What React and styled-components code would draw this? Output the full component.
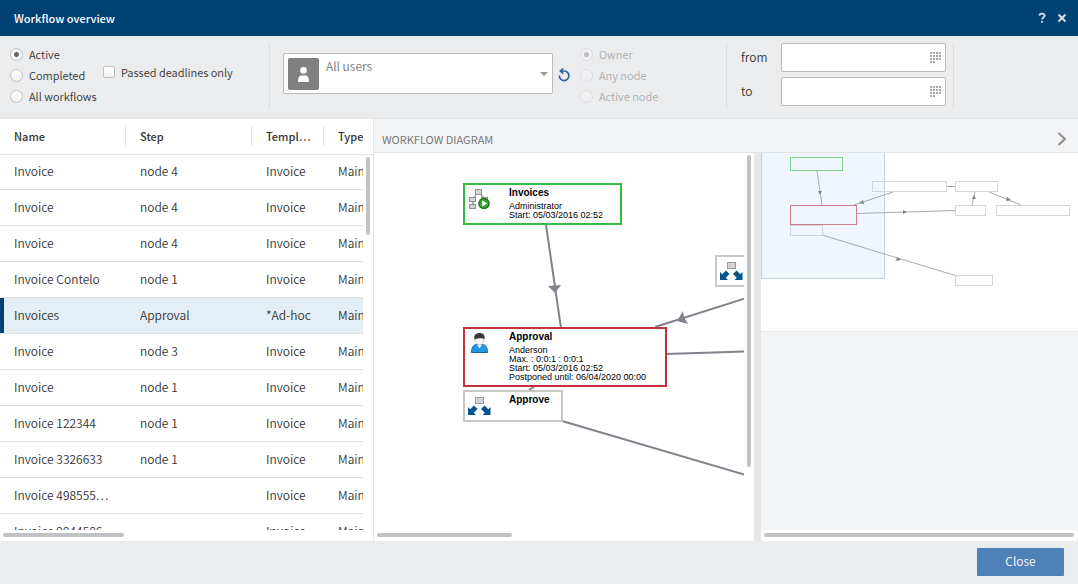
import { useState } from 'react'
import styled, { createGlobalStyle, css } from 'styled-components'

const GlobalStyle = createGlobalStyle`
  * {
    box-sizing: border-box;
  }

  body {
    margin: 0;
    color: #333;
    font-family: 'Noto Sans CJK KR', 'Source Sans Pro', sans-serif;
    font-size: 12px;
    font-weight: 350;
  }

  button, input, select {
    font: inherit;
    color: inherit;
  }
`

const Dialog = styled.div`
  height: 100vh;
  display: flex;
  flex-direction: column;
  background: #ebecee;
`

const TitleBar = styled.header`
  flex: 0 0 36px;
  display: flex;
  align-items: center;
  justify-content: space-between;
  padding: 0 8px 0 14px;
  background: #004173;
  color: #fff;
`

const Title = styled.h1`
  margin: 0;
  font-size: 11px;
  font-weight: 500;
`

const TitleActions = styled.div`
  display: flex;
  gap: 4px;
`

const IconButton = styled.button`
  display: flex;
  align-items: center;
  justify-content: center;
  width: 16px;
  height: 16px;
  padding: 0;
  border: none;
  background: none;
  cursor: pointer;
`

const FilterBar = styled.form`
  flex: 0 0 83px;
  display: flex;
  align-items: flex-start;
  padding: 7px 0 0 10px;
  border-bottom: 1px solid #e3e4e6;
`

const RadioGroup = styled.div`
  display: flex;
  flex-direction: column;
  gap: 1px;
  padding-top: 1px;
  opacity: ${(props) => (props.$disabled ? 0.35 : 1)};
`

const StatusGroup = styled(RadioGroup)`
  width: 93px;
`

const Option = styled.label`
  display: flex;
  align-items: center;
  gap: 6px;
  height: 20px;
  font-size: 11px;
  line-height: 20px;
  white-space: nowrap;
`

const choice = css`
  appearance: none;
  flex: none;
  width: 13px;
  height: 13px;
  margin: 0;
  border: 1px solid #c0c0c0;
  background: linear-gradient(#fff, #f1f1f1);
`

const Radio = styled.input.attrs({ type: 'radio' })`
  ${choice}
  border-radius: 50%;

  &:checked {
    background: radial-gradient(circle, #666 0 2px, #f8f8f8 3px);
  }
`

const Checkbox = styled.input.attrs({ type: 'checkbox' })`
  ${choice}
  width: 12px;
  height: 12px;
  border-radius: 2px;

  &:checked {
    background: #666;
    box-shadow: inset 0 0 0 2px #fff;
  }
`

const DeadlineOption = styled(Option)`
  margin-top: 19px;
  width: 166px;
`

const Divider = styled.div`
  width: 1px;
  height: 66px;
  background: #dcdde0;
`

const UserPicker = styled.div`
  display: flex;
  align-items: flex-start;
  width: 270px;
  height: 41px;
  margin: 10px 3px 0 13px;
  padding: 4px;
  border: 1px solid #bcbcbc;
  border-radius: 2px;
  background: #fff;
`

const Avatar = styled.div`
  display: flex;
  align-items: center;
  justify-content: center;
  width: 31px;
  height: 32px;
  border-radius: 2px;
  background: #808080;
`

const UserSelect = styled.select`
  appearance: none;
  flex: 1;
  height: 16px;
  padding: 0 0 0 7px;
  border: none;
  background: none;
  color: #777;
  line-height: 16px;
  outline: none;
`

const Caret = styled.span`
  align-self: center;
  border: 4px solid transparent;
  border-top-color: #999;
  border-bottom: none;
`

const ResetButton = styled(IconButton)`
  margin: 24px 8px 0 0;
`

const OwnerGroup = styled(RadioGroup)`
  width: 146px;
`

const DateFields = styled.div`
  display: flex;
  flex-direction: column;
  gap: 5px;
  padding: 0 7px 0 14px;
`

const DateRow = styled.div`
  display: flex;
  align-items: center;
`

const DateLabel = styled.label`
  width: 40px;
  padding-bottom: 3px;
`

const DateBox = styled.div`
  display: flex;
  align-items: center;
  width: 165px;
  height: 29px;
  padding-right: 2px;
  border: 1px solid #bcbcbc;
  border-radius: 2px;
  background: #fff;
`

const DateInput = styled.input`
  flex: 1;
  min-width: 0;
  padding: 0 6px;
  border: none;
  background: none;
  outline: none;
`

const Content = styled.main`
  flex: 1;
  min-height: 0;
  display: flex;
  background: #fff;
`

const ListPane = styled.section`
  flex: 0 0 374px;
  display: grid;
  grid-template: minmax(0, 1fr) 11px / minmax(0, 1fr) 10px;
  border-right: 1px solid #e3e4e6;
`

const TableArea = styled.div`
  overflow: hidden;
`

const Table = styled.table`
  width: 100%;
  table-layout: fixed;
  border-spacing: 0;
`

const HeadCell = styled.th`
  width: ${(props) => (props.$width ? `${props.$width}px` : 'auto')};
  height: 35px;
  padding: 0 0 2px;
  box-shadow: 0 1px 0 #e3e4e6;
  font-weight: 500;
  font-size: 11px;
  line-height: 20px;
  text-align: left;

  span {
    display: block;
    overflow: hidden;
    padding: 0 10px 0 14px;
    border-right: 1px solid #e3e4e6;
    white-space: nowrap;
  }

  &:last-child span {
    padding-right: 0;
    border: none;
  }
`

const Row = styled.tr`
  background: ${(props) => (props.$selected ? '#e3eef5' : 'transparent')};
  cursor: pointer;

  td:first-child {
    box-shadow: ${(props) => (props.$selected ? 'inset 4px 0 0 #004173' : 'none')};
  }
`

const Cell = styled.td`
  height: 36px;
  padding: 0 10px 2px 14px;
  overflow: hidden;
  border-bottom: 1px solid #e0e1e3;
  text-overflow: ellipsis;
  white-space: nowrap;

  &:last-child {
    padding-right: 0;
    text-overflow: clip;
  }
`

const Gutter = styled.div`
  padding: 38px 3px 0;

  &::before {
    content: '';
    display: block;
    height: 1px;
    margin: -3px -3px 2px;
    background: #e3e4e6;
  }
`

const ThumbY = styled.div`
  width: 4px;
  height: ${(props) => props.$length};
  border-radius: 2px;
  background: #c1c2c4;
`

const ThumbX = styled.div`
  width: ${(props) => props.$length};
  height: 4px;
  margin: 3px;
  border-radius: 2px;
  background: #c1c2c4;
`

const DiagramPane = styled.section`
  flex: 1;
  min-width: 0;
  display: flex;
  flex-direction: column;
`

const PaneHeader = styled.div`
  flex: 0 0 34px;
  display: flex;
  align-items: center;
  justify-content: space-between;
  padding: 6px 8px 0;
  border-bottom: 1px solid #e3e4e6;
  background: #f3f4f6;
`

const PaneTitle = styled.h2`
  margin: 0;
  color: #777;
  font-size: 11px;
  font-weight: 400;
`

const PaneBody = styled.div`
  flex: 1;
  min-height: 0;
  display: grid;
  grid-template-columns: 380fr 7px 317fr;
`

const CanvasView = styled.div`
  min-width: 0;
  display: grid;
  grid-template: minmax(0, 1fr) 11px / minmax(0, 1fr) 10px;
`

const CanvasTrack = styled.div`
  padding: 2px 3px 0;
`

const Canvas = styled.div`
  position: relative;
  overflow: hidden;
`

const Edges = styled.svg`
  position: absolute;
  inset: 0;
`

const Splitter = styled.div`
  background: #e6e7e9;
  cursor: col-resize;
`

const Node = styled.article`
  position: absolute;
  display: flex;
  gap: 17px;
  padding: 4px;
  border: 2px solid ${(props) => props.$color};
  background: #fff;
  color: #000;
  font-family: 'Liberation Sans', Arial, sans-serif;
  font-size: 9px;
  font-weight: 400;
  line-height: 9px;
  white-space: nowrap;

  svg {
    flex: none;
  }
`

const NodeTitle = styled.h3`
  margin: -1px 0 4px;
  font-size: 10px;
  line-height: 10px;
`

const Overview = styled.div`
  min-width: 0;
  display: flex;
  flex-direction: column;
  background: #f3f4f6;
`

const MapArea = styled.div`
  height: 179px;
  overflow: hidden;
  border-bottom: 1px solid #e6e7e9;
  background: #fff;
`

const OverviewTrack = styled.div`
  margin-top: auto;
  padding-bottom: 1px;
  border-radius: 4px;
  background: #fff;
`

const Footer = styled.footer`
  flex: 0 0 43px;
  display: flex;
  justify-content: flex-end;
  align-items: flex-start;
  padding: 7px 14px 0;
`

const CloseButton = styled.button`
  width: 87px;
  height: 28px;
  padding: 0 0 4px;
  border: none;
  border-radius: 1px;
  background: #5080b8;
  color: #fff;
  cursor: pointer;
`

const columns = [
  { title: 'Name', width: 126 },
  { title: 'Step', width: 126 },
  { title: 'Templ…', width: 72 },
  { title: 'Type' }
]

const workflows = [
  ['Invoice', 'node 4', 'Invoice'],
  ['Invoice', 'node 4', 'Invoice'],
  ['Invoice', 'node 4', 'Invoice'],
  ['Invoice Contelo', 'node 1', 'Invoice'],
  ['Invoices', 'Approval', '*Ad-hoc'],
  ['Invoice', 'node 3', 'Invoice'],
  ['Invoice', 'node 1', 'Invoice'],
  ['Invoice 122344', 'node 1', 'Invoice'],
  ['Invoice 3326633', 'node 1', 'Invoice'],
  ['Invoice 498555…', '', 'Invoice'],
  ['Invoice 9944586', '', 'Invoice']
]

const statuses = ['Active', 'Completed', 'All workflows']
const scopes = ['Owner', 'Any node', 'Active node']

// node positions on the diagram canvas
const nodes = [
  {
    title: 'Invoices',
    icon: 'start',
    color: '#35bb3f',
    box: { left: 89, top: 30, width: 159, height: 42 },
    lines: ['Administrator', 'Start: 05/03/2016 02:52']
  },
  {
    title: 'Approval',
    icon: 'person',
    color: '#c2333b',
    box: { left: 89, top: 174, width: 204, height: 60 },
    lines: ['Anderson', 'Max. : 0:0:1 : 0:0:1', 'Start: 05/03/2016 02:52', 'Postponed until: 06/04/2020 00:00']
  },
  {
    title: 'Approve',
    icon: 'split',
    color: '#c8c8c8',
    box: { left: 89, top: 237, width: 100, height: 32 },
    lines: []
  },
  {
    title: '',
    icon: 'split',
    color: '#c8c8c8',
    box: { left: 341, top: 102, width: 100, height: 32 },
    lines: []
  }
]

const CloseIcon = () => (
  <svg width="10" height="10" viewBox="0 0 10 10">
    <path d="M1.5 1.5l7 7M8.5 1.5l-7 7" stroke="#d5e0ea" strokeWidth="2" />
  </svg>
)

const HelpIcon = () => (
  <svg width="10" height="12" viewBox="0 0 10 12">
    <path d="M2.5 3.6C2.6 1.1 7.7 1 7.7 3.6 7.7 5.5 5 5.4 5 7.6" fill="none" stroke="#d5e0ea" strokeWidth="1.8" />
    <circle cx="5" cy="9.8" r="1.1" fill="#d5e0ea" />
  </svg>
)

const UserIcon = () => (
  <svg width="13" height="17" viewBox="0 0 13 17">
    <circle cx="6.5" cy="4.4" r="3.3" fill="#fff" />
    <path d="M1 16c0-4.5 1.5-6.5 3.5-6.5h4c2 0 3.5 2 3.5 6.5z" fill="#fff" />
  </svg>
)

const ResetIcon = () => (
  <svg width="12" height="14" viewBox="0 0 12 14">
    <path d="M1.3 7.5A4.8 4.8 0 1 0 6 3H2.5" fill="none" stroke="#2a5ca0" strokeWidth="1.6" />
    <path d="M5.2 0.5L2.3 3l2.9 2.6" fill="none" stroke="#2a5ca0" strokeWidth="1.5" />
  </svg>
)

const CalendarIcon = () => (
  <svg width="11" height="11" viewBox="0 0 11 11" fill="#a6a6a6">
    {[0, 3, 6, 9].map((y) =>
      [0, 3, 6, 9].map((x) => (y < 9 || x < 6) && <rect key={`${x}-${y}`} x={x} y={y} width="2" height="2" />)
    )}
  </svg>
)

const ChevronIcon = () => (
  <svg width="10" height="14" viewBox="0 0 10 14">
    <path d="M1.5 1L8 7l-6.5 6" fill="none" stroke="#8e8e90" strokeWidth="2" />
  </svg>
)

const NodeIcon = ({ type }) => {
  if (type === 'start') {
    return (
      <svg width="23" height="22" viewBox="0 0 23 22">
        <path d="M4 9.5L7 6.500M12 6l3 3M4 13v4" fill="none" stroke="#999" strokeWidth="1.5" />
        <g fill="#d4d4d4" stroke="#8f8f8f">
          <rect x="6.5" y="0.5" width="6" height="5" />
          <rect x="0.5" y="8.5" width="6" height="4" />
          <rect x="0.5" y="15.5" width="6" height="4" />
          <rect x="12.5" y="8.5" width="6" height="4" />
        </g>
        <circle cx="15" cy="14.5" r="5.8" fill="#1c7a22" />
        <circle cx="15" cy="14.5" r="4.3" fill="#37a63c" />
        <path d="M13.2 11.5l5 3-5 3z" fill="#fff" />
      </svg>
    )
  }
  if (type === 'person') {
    return (
      <svg width="23" height="22" viewBox="0 0 23 22">
        <path d="M2.5 19.5c0-5 2-8 5-8h6c3 0 5 3 5 8z" fill="#2196e8" stroke="#1266a8" />
        <path d="M8 11.5l2.5 4 2.5-4z" fill="#fff" />
        <ellipse cx="10.5" cy="7" rx="4.5" ry="5" fill="#f3f3f3" stroke="#aaa" strokeWidth="0.6" />
        <path d="M5.5 6.5C4.500 2 7 0 10.5 0s6 2 5 6.5C14 4.5 8 5.5 5.5 6.5z" fill="#353a40" />
      </svg>
    )
  }
  return (
    <svg width="23" height="22" viewBox="0 0 23 22" overflow="visible">
      <rect x="6.5" y="1.5" width="8" height="6" fill="#d4d4d4" stroke="#999" />
      <path
        d="M-1 19v-8l2.200 2.200L5 9.500l3.500 3.500-3.800 3.700L7 19zM21.500 19v-8l-2.200 2.200L15.500 9.500 12 13l3.800 3.700L13.500 19z"
        fill="#04558f"
      />
    </svg>
  )
}

const DiagramEdges = () => (
  <Edges width="100%" height="100%">
    <g stroke="#83818c" strokeWidth="2" fill="none">
      <path d="M172 72l15 103M281 174l101-32M292 201l91-3M155 237l6-4M188 268l194 57" />
    </g>
    <g fill="#83818c">
      <path d="M174 133l13-1-6 8z" />
      <path d="M303 168l6-10 1 6 4 7z" />
    </g>
  </Edges>
)

const OverviewMap = () => (
  <svg width="317" height="178" viewBox="0 0 317 178">
    <rect x="0.5" y="-1" width="123" height="126.5" fill="#eff6fe" stroke="#c2d2de" />
    <g stroke="#a9a9b2" fill="none">
      <path d="M56 18l5 34M132 39l-39 13M95 60.5l99-3M185 33.5h9M211 52l3-13M228 39l32 13M61 82l135 41M51 72h5" />
    </g>
    <g fill="#83818c">
      <path d="M57 38l4 0-2 4zM98 50l4-3 1 4zM142 57l4 2-4 2zM211 46l2-4 2 4zM246 44l4 3-5 1zM136 104l4 3-5 1z" />
    </g>
    <g fill="none" stroke="#d3d5da">
      <rect x="111.5" y="28.5" width="74" height="10" />
      <rect x="194.5" y="28.5" width="42" height="10" />
      <rect x="194.5" y="52.5" width="30" height="10" />
      <rect x="235.5" y="52.5" width="73" height="10" />
      <rect x="29.5" y="72.5" width="32" height="10" />
      <rect x="194.5" y="122.5" width="37" height="10" />
    </g>
    <rect x="29.5" y="4.5" width="52" height="13" fill="#eff6fe" stroke="#7fd28e" />
    <rect x="29.5" y="52.5" width="66" height="19" fill="#eff6fe" stroke="#cb7f89" />
  </svg>
)

const App = () => {
  const [status, setStatus] = useState('Active')
  const [selected, setSelected] = useState(4)

  return (
    <Dialog>
      <GlobalStyle />
      <TitleBar>
        <Title>Workflow overview</Title>
        <TitleActions>
          <IconButton aria-label="Help">
            <HelpIcon />
          </IconButton>
          <IconButton aria-label="Close window">
            <CloseIcon />
          </IconButton>
        </TitleActions>
      </TitleBar>

      <FilterBar>
        <StatusGroup>
          {statuses.map((name) => (
            <Option key={name}>
              <Radio name="status" checked={status === name} onChange={() => setStatus(name)} />
              {name}
            </Option>
          ))}
        </StatusGroup>
        <DeadlineOption>
          <Checkbox />
          Passed deadlines only
        </DeadlineOption>
        <Divider />
        <UserPicker>
          <Avatar>
            <UserIcon />
          </Avatar>
          <UserSelect aria-label="User">
            <option>All users</option>
          </UserSelect>
          <Caret />
        </UserPicker>
        <ResetButton type="button" aria-label="Reset user">
          <ResetIcon />
        </ResetButton>
        <OwnerGroup $disabled>
          {scopes.map((name) => (
            <Option key={name}>
              <Radio name="scope" defaultChecked={name === 'Owner'} disabled />
              {name}
            </Option>
          ))}
        </OwnerGroup>
        <Divider />
        <DateFields>
          {['from', 'to'].map((name) => (
            <DateRow key={name}>
              <DateLabel htmlFor={name}>{name}</DateLabel>
              <DateBox>
                <DateInput id={name} type="text" />
                <IconButton type="button" aria-label={`Pick ${name} date`}>
                  <CalendarIcon />
                </IconButton>
              </DateBox>
            </DateRow>
          ))}
        </DateFields>
        <Divider />
      </FilterBar>

      <Content>
        <ListPane>
          <TableArea>
            <Table>
              <thead>
                <tr>
                  {columns.map((column) => (
                    <HeadCell key={column.title} $width={column.width}>
                      <span>{column.title}</span>
                    </HeadCell>
                  ))}
                </tr>
              </thead>
              <tbody>
                {workflows.map(([name, step, template], index) => (
                  <Row key={index} $selected={index === selected} onClick={() => setSelected(index)}>
                    <Cell>{name}</Cell>
                    <Cell>{step}</Cell>
                    <Cell>{template}</Cell>
                    <Cell>Main</Cell>
                  </Row>
                ))}
              </tbody>
            </Table>
          </TableArea>
          <Gutter>
            <ThumbY $length="78px" />
          </Gutter>
          <ThumbX $length="121px" />
        </ListPane>

        <DiagramPane>
          <PaneHeader>
            <PaneTitle>WORKFLOW DIAGRAM</PaneTitle>
            <IconButton aria-label="Collapse overview">
              <ChevronIcon />
            </IconButton>
          </PaneHeader>
          <PaneBody>
            <CanvasView>
              <Canvas>
                <DiagramEdges />
                {nodes.map((node, index) => (
                  <Node key={index} $color={node.color} style={node.box}>
                    <NodeIcon type={node.icon} />
                    {node.title && (
                      <div>
                        <NodeTitle>{node.title}</NodeTitle>
                        {node.lines.map((line) => (
                          <div key={line}>{line}</div>
                        ))}
                      </div>
                    )}
                  </Node>
                ))}
              </Canvas>
              <CanvasTrack>
                <ThumbY $length="312px" />
              </CanvasTrack>
              <ThumbX $length="135px" />
            </CanvasView>
            <Splitter />
            <Overview>
              <MapArea>
                <OverviewMap />
              </MapArea>
              <OverviewTrack>
                <ThumbX $length="calc(100% - 7px)" />
              </OverviewTrack>
            </Overview>
          </PaneBody>
        </DiagramPane>
      </Content>

      <Footer>
        <CloseButton>Close</CloseButton>
      </Footer>
    </Dialog>
  )
}

export default App
